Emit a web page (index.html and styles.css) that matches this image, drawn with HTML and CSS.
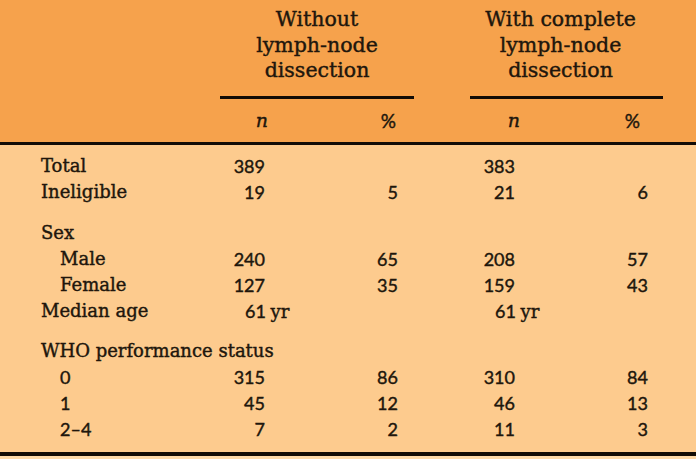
FILE: index.html
```html
<!DOCTYPE html>
<html lang="en">
<head>
<meta charset="utf-8">
<title>Patient characteristics</title>
<link rel="stylesheet" href="styles.css">
</head>
<body>
<div class="page">
  <div class="head">
    <div class="grid titles">
      <div class="lbl"></div>
      <div class="group g1"><div class="gtitle">Without<br>lymph-node<br>dissection</div></div>
      <div class="gap"></div>
      <div class="group g2"><div class="gtitle">With complete<br>lymph-node<br>dissection</div></div>
      <div class="end"></div>
    </div>
    <div class="grid subs">
      <div class="lbl"></div>
      <div class="sub n1"><i>n</i></div>
      <div class="sub p1">%</div>
      <div class="gap"></div>
      <div class="sub n2"><i>n</i></div>
      <div class="sub p2">%</div>
      <div class="end"></div>
    </div>
  </div>
  <div class="body">
    <div class="block">
      <div class="grid row"><div class="lbl">Total</div><div class="num n1">389</div><div class="num p1"></div><div class="gap"></div><div class="num n2">383</div><div class="num p2"></div><div class="end"></div></div>
      <div class="grid row"><div class="lbl">Ineligible</div><div class="num n1">19</div><div class="num p1">5</div><div class="gap"></div><div class="num n2">21</div><div class="num p2">6</div><div class="end"></div></div>
    </div>
    <div class="block">
      <div class="grid row"><div class="lbl">Sex</div><div class="num n1"></div><div class="num p1"></div><div class="gap"></div><div class="num n2"></div><div class="num p2"></div><div class="end"></div></div>
      <div class="grid row"><div class="lbl ind">Male</div><div class="num n1">240</div><div class="num p1">65</div><div class="gap"></div><div class="num n2">208</div><div class="num p2">57</div><div class="end"></div></div>
      <div class="grid row"><div class="lbl ind">Female</div><div class="num n1">127</div><div class="num p1">35</div><div class="gap"></div><div class="num n2">159</div><div class="num p2">43</div><div class="end"></div></div>
      <div class="grid row"><div class="lbl">Median age</div><div class="num n1 age"><span class="agev">61 <span class="yr">yr</span></span></div><div class="num p1"></div><div class="gap"></div><div class="num n2 age"><span class="agev">61 <span class="yr">yr</span></span></div><div class="num p2"></div><div class="end"></div></div>
    </div>
    <div class="block">
      <div class="grid row"><div class="lbl">WHO performance status</div><div class="num n1"></div><div class="num p1"></div><div class="gap"></div><div class="num n2"></div><div class="num p2"></div><div class="end"></div></div>
      <div class="grid row"><div class="lbl ind num-lbl">0</div><div class="num n1">315</div><div class="num p1">86</div><div class="gap"></div><div class="num n2">310</div><div class="num p2">84</div><div class="end"></div></div>
      <div class="grid row"><div class="lbl ind num-lbl">1</div><div class="num n1">45</div><div class="num p1">12</div><div class="gap"></div><div class="num n2">46</div><div class="num p2">13</div><div class="end"></div></div>
      <div class="grid row"><div class="lbl ind num-lbl">2–4</div><div class="num n1">7</div><div class="num p1">2</div><div class="gap"></div><div class="num n2">11</div><div class="num p2">3</div><div class="end"></div></div>
    </div>
  </div>
  <div class="foot"></div>
</div>
</body>
</html>
```
FILE: styles.css
```css
html, body {
  margin: 0;
  padding: 0;
}
body {
  width: 696px;
  height: 459px;
  overflow: hidden;
  background: #fdd9a8;
  color: #20160c;
  font-family: "DejaVu Serif", serif;
  font-size: 18px;
  -webkit-text-stroke: 0.4px #20160c;
}
.page {
  width: 696px;
}
.grid {
  display: grid;
  grid-template-columns: 220px 97px 97px 56px 96px 97px 33px;
}
.head {
  background: #f6a24c;
  padding-top: 7px;
  border-bottom: 3px solid #120c06;
}
.titles .group {
  grid-column: span 2;
  padding-bottom: 12px;
  border-bottom: 3px solid #120c06;
  text-align: center;
}
.titles .g1 { padding-left: 0; }
.titles .g2 { padding-right: 12px; }
.gtitle {
  font-size: 20.5px;
  line-height: 25.5px;
  white-space: nowrap;
}
.subs .sub {
  line-height: 43px;
  height: 43px;
  text-align: right;
  font-size: 19px;
}
.sub i {
  font-family: "DejaVu Serif", serif;
  font-style: italic;
}
.subs .n1 { padding-right: 49px; }
.subs .p1 { padding-right: 18px; font-family: "Lato", sans-serif; }
.subs .n2 { padding-right: 46px; }
.subs .p2 { padding-right: 23px; font-family: "Lato", sans-serif; }
.body {
  background: #fdcb8e;
  padding-top: 8px;
  padding-bottom: 10px;
  border-bottom: 4px solid #120c06;
}
.block + .block {
  margin-top: 15px;
}
.block:last-child {
  margin-top: 14px;
}
.row {
  height: 26px;
  line-height: 26px;
}
.lbl {
  padding-left: 41px;
  white-space: nowrap;
}
.lbl.ind {
  padding-left: 60px;
}
.num-lbl {
  font-family: "Lato", sans-serif;
  font-size: 18px;
}
.num {
  font-family: "Lato", sans-serif;
  font-size: 18px;
  text-align: right;
}
.num.n1 { padding-right: 52px; }
.num.p1 { padding-right: 16px; }
.num.n2 { padding-right: 51px; }
.num.p2 { padding-right: 15px; }
.num.age {
  text-align: left;
  white-space: nowrap;
}
.num.n1.age { padding-left: 25px; padding-right: 0; }
.num.n2.age { padding-left: 25px; padding-right: 0; }
.yr {
  font-family: "DejaVu Serif", serif;
  font-size: 18px;
}
.foot {
  height: 4px;
}
```
